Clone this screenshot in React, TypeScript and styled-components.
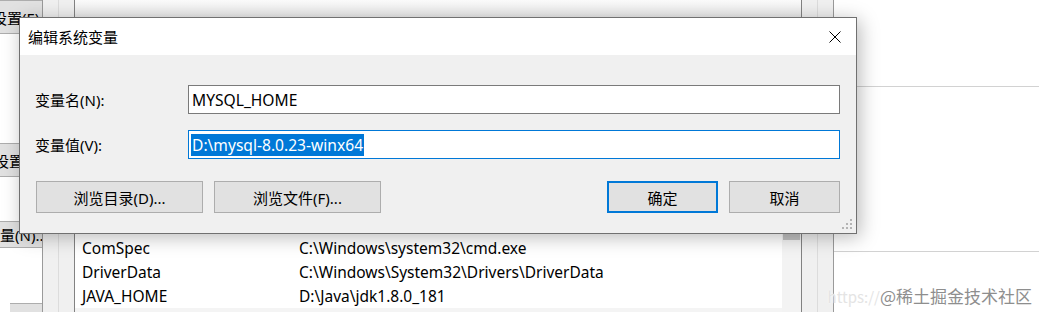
import React from 'react';
import styled, { createGlobalStyle } from 'styled-components';

const GlobalStyle = createGlobalStyle`
	html, body {
		margin: 0;
		padding: 0;
		background: #fff;
	}
	body {
		font-family: 'Noto Sans', 'Noto Sans CJK SC', sans-serif;
		font-size: 15px;
		color: #000;
	}
`;

const Screen = styled.div`
	position: relative;
	width: 1039px;
	height: 312px;
	overflow: hidden;
	display: flex;
	background: #fff;
`;

/* ---------- background: system properties edge ---------- */

const SysEdge = styled.div`
	width: 42px;
	flex: none;
	display: flex;
	flex-direction: column;
	overflow: hidden;
	background: #fff;
`;

const EdgeButton = styled.div<{ $h: number; $shift: number; $indent?: number }>`
	height: ${(p) => p.$h}px;
	flex: none;
	margin-left: ${(p) => p.$indent ?? 0}px;
	box-sizing: border-box;
	background: #e1e1e1;
	border-top: 1px solid #adadad;
	border-bottom: 1px solid #adadad;
	display: flex;
	align-items: center;
	white-space: nowrap;

	span {
		margin-left: ${(p) => p.$shift}px;
	}
`;

const EdgeGap = styled.div<{ $h: number }>`
	height: ${(p) => p.$h}px;
	flex: none;
`;

/* ---------- background: environment variables window ---------- */

const EnvWindow = styled.div`
	width: 792px;
	flex: none;
	box-sizing: border-box;
	border-left: 1px solid #9a9a9a;
	border-right: 1px solid #9a9a9a;
	background: #f0f0f0;
	padding: 0 15px;
	display: flex;
`;

const GroupBox = styled.div`
	flex: 1;
	border-left: 1px solid #dcdcdc;
	border-right: 1px solid #dcdcdc;
	padding: 0 15px;
	display: flex;
`;

const ListColumn = styled.div`
	flex: 1;
	border-left: 1px solid #828282;
	border-right: 1px solid #828282;
	display: flex;
	flex-direction: column;
`;

const TopBand = styled.div`
	height: 17px;
	flex: none;
	background: linear-gradient(#fbfbfb, #e9e9e9);
`;

const HiddenArea = styled.div`
	height: 195px;
	flex: none;
	background: #f0f0f0;
`;

const SystemList = styled.div`
	flex: 1;
	display: flex;
	background: #fff;
`;

const ListBody = styled.div`
	flex: 1;
	display: flex;
	flex-direction: column;
`;

const Row = styled.div<{ $shade?: boolean }>`
	height: 24px;
	flex: none;
	display: grid;
	grid-template-columns: 217px 1fr;
	align-items: center;
	padding-left: 7px;
	font-size: 15.5px;
	white-space: nowrap;
	overflow: hidden;
	background: ${(p) => (p.$shade ? '#f4f4f4' : '#fff')};
`;

const ScrollBar = styled.div`
	width: 19px;
	flex: none;
	background: #f3f3f3;
	display: flex;
	flex-direction: column;
`;

const ScrollThumb = styled.div`
	height: 28px;
	margin: 0 1px;
	background: #c2c2c2;
`;

const RightArea = styled.div`
	flex: 1;
	display: flex;
	flex-direction: column;
	background: #fff;
`;

const RightBlock = styled.div<{ $h: number }>`
	height: ${(p) => p.$h}px;
	flex: none;
	border-bottom: 1px solid #d2d2d2;
`;

/* ---------- the dialog ---------- */

const Dialog = styled.div`
	position: absolute;
	left: 19px;
	top: 17px;
	width: 838px;
	height: 217px;
	box-sizing: border-box;
	border: 1px solid #707070;
	background: #f0f0f0;
	box-shadow: 3px 3px 18px rgba(0, 0, 0, 0.28);
	display: flex;
	flex-direction: column;
`;

const TitleBar = styled.div`
	height: 37px;
	flex: none;
	background: #fff;
	display: flex;
	align-items: center;
	padding-left: 8px;
`;

const Title = styled.div`
	flex: 1;
	font-size: 15px;
	padding-bottom: 1px;
`;

const CloseButton = styled.div`
	width: 42px;
	height: 100%;
	display: flex;
	align-items: center;
	justify-content: center;
`;

const Body = styled.div`
	flex: 1;
	display: flex;
	flex-direction: column;
	padding: 30px 16px 0 15px;
	gap: 16px;
`;

const FieldRow = styled.div`
	display: flex;
	align-items: center;
	height: 29px;
`;

const Label = styled.div`
	width: 153px;
	flex: none;
	font-size: 15px;
`;

const Field = styled.div<{ $focused?: boolean }>`
	flex: 1;
	height: 29px;
	box-sizing: border-box;
	border: 1px solid ${(p) => (p.$focused ? '#0078d7' : '#7a7a7a')};
	background: #fff;
	display: flex;
	align-items: center;
	padding: 0 2px;
	font-size: 15.6px;
	white-space: nowrap;
`;

const FieldText = styled.span`
	padding-left: 1px;
`;

const Selection = styled.span`
	background: #0078d7;
	color: #fff;
	line-height: 22px;
	padding: 0 1px;
`;

const ButtonRow = styled.div`
	display: flex;
	gap: 11px;
	margin-top: 6px;
	padding-left: 1px;
`;

const Spacer = styled.div`
	flex: 1;
`;

const Button = styled.button<{ $w: number; $default?: boolean }>`
	width: ${(p) => p.$w}px;
	height: 32px;
	box-sizing: border-box;
	background: #e1e1e1;
	border: ${(p) => (p.$default ? '2px solid #0078d7' : '1px solid #adadad')};
	font-family: 'Noto Sans', 'Noto Sans CJK SC', sans-serif;
	font-size: 15px;
	color: #000;
	padding: 0;
	display: flex;
	align-items: center;
	justify-content: center;
`;

const Grip = styled.svg`
	position: absolute;
	right: 2px;
	bottom: 2px;
`;

const Watermark = styled.div`
	position: absolute;
	right: 7px;
	bottom: 4px;
	font-family: 'Noto Sans CJK SC', sans-serif;
	font-size: 17px;
	color: #8e8e8e;
	white-space: nowrap;
	text-shadow: 0 0 2px #fff;

	span {
		color: #e4e4e4;
		font-size: 15px;
	}
`;

const rows = [
	{ name: 'CLASSPATH', value: '.;%JAVA_HOME%\\lib\\dt.jar;%JAVA_HOME%\\lib\\tools.jar;' },
	{ name: 'ComSpec', value: 'C:\\Windows\\system32\\cmd.exe' },
	{ name: 'DriverData', value: 'C:\\Windows\\System32\\Drivers\\DriverData' },
	{ name: 'JAVA_HOME', value: 'D:\\Java\\jdk1.8.0_181' },
	{ name: 'NUMBER_OF_PROCESSORS', value: '8', shade: true },
];

const App = () => {
	return (
		<Screen>
			<GlobalStyle />

			<SysEdge>
				<EdgeButton $h={34} $shift={-8}>
					<span>设置(E)...</span>
				</EdgeButton>
				<EdgeGap $h={109} />
				<EdgeButton $h={34} $shift={-6}>
					<span>设置(T)...</span>
				</EdgeButton>
				<EdgeGap $h={44} />
				<EdgeButton $h={27} $shift={-45}>
					<span>环境变量(N)...</span>
				</EdgeButton>
				<EdgeGap $h={55} />
				<EdgeButton $h={34} $shift={10} $indent={10}>
					<span>确定</span>
				</EdgeButton>
			</SysEdge>

			<EnvWindow>
				<GroupBox>
					<ListColumn>
						<TopBand />
						<HiddenArea />
						<SystemList>
							<ListBody>
								{rows.map((r) => (
									<Row key={r.name} $shade={r.shade}>
										<span>{r.name}</span>
										<span>{r.value}</span>
									</Row>
								))}
							</ListBody>
							<ScrollBar>
								<ScrollThumb />
							</ScrollBar>
						</SystemList>
					</ListColumn>
				</GroupBox>
			</EnvWindow>

			<RightArea>
				<RightBlock $h={86} />
				<RightBlock $h={164} />
			</RightArea>

			<Dialog>
				<TitleBar>
					<Title>编辑系统变量</Title>
					<CloseButton>
						<svg width="12" height="12" viewBox="0 0 12 12">
							<path d="M0.5 0.5 L11.5 11.5 M11.5 0.5 L0.5 11.5" stroke="#000" strokeWidth="1" fill="none" />
						</svg>
					</CloseButton>
				</TitleBar>
				<Body>
					<FieldRow>
						<Label>变量名(N):</Label>
						<Field>
							<FieldText>MYSQL_HOME</FieldText>
						</Field>
					</FieldRow>
					<FieldRow>
						<Label>变量值(V):</Label>
						<Field $focused>
							<Selection>D:\mysql-8.0.23-winx64</Selection>
						</Field>
					</FieldRow>
					<ButtonRow>
						<Button $w={167}>浏览目录(D)...</Button>
						<Button $w={167}>浏览文件(F)...</Button>
						<Spacer />
						<Button $w={111} $default>
							确定
						</Button>
						<Button $w={111}>取消</Button>
					</ButtonRow>
				</Body>
				<Grip width="12" height="12" viewBox="0 0 12 12">
					<g fill="#b4b4b4">
						<rect x="8" y="0" width="2" height="2" />
						<rect x="4" y="4" width="2" height="2" />
						<rect x="8" y="4" width="2" height="2" />
						<rect x="0" y="8" width="2" height="2" />
						<rect x="4" y="8" width="2" height="2" />
						<rect x="8" y="8" width="2" height="2" />
					</g>
				</Grip>
			</Dialog>

			<Watermark>
				<span>https://</span>@稀土掘金技术社区
			</Watermark>
		</Screen>
	);
};

export default App;
